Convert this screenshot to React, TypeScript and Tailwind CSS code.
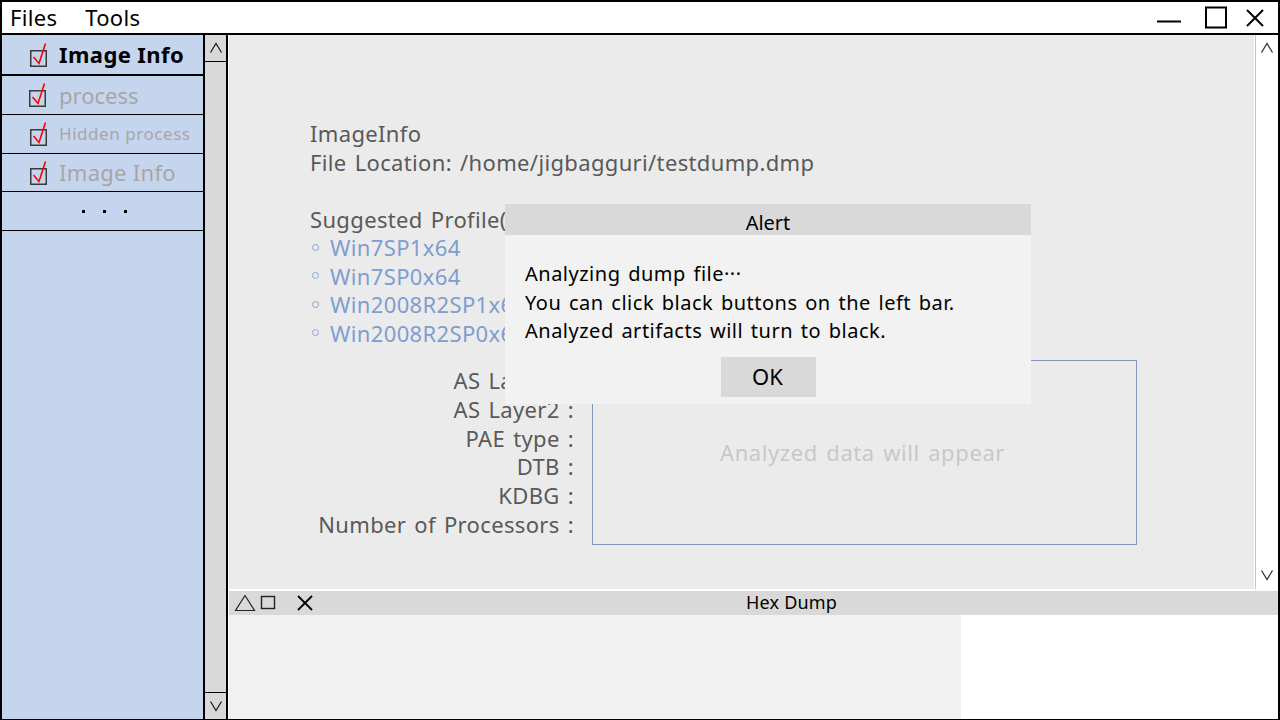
import React from "react";

function Check() {
  return (
    <svg width="20" height="26" viewBox="0 0 20 26" className="shrink-0">
      <rect x="1.75" y="8.75" width="15.5" height="15.5" fill="none" stroke="#3a3a3a" strokeWidth="1.5" />
      <polyline points="4.5,15 10,21.5 16.5,1.5" fill="none" stroke="#ff0000" strokeWidth="1.6" strokeLinejoin="miter" />
    </svg>
  );
}

function Chevron({ up, color = "#222" }: { up?: boolean; color?: string }) {
  return (
    <svg width="14" height="12" viewBox="0 0 14 12">
      {up ? (
        <polyline points="1.5,10.5 7,1.5 12.5,10.5" fill="none" stroke={color} strokeWidth="1.3" />
      ) : (
        <polyline points="1.5,1.5 7,10.5 12.5,1.5" fill="none" stroke={color} strokeWidth="1.3" />
      )}
    </svg>
  );
}

const profiles = ["Win7SP1x64", "Win7SP0x64", "Win2008R2SP1x64", "Win2008R2SP0x64"];
const labels = ["AS Layer1 :", "AS Layer2 :", "PAE type :", "DTB :", "KDBG :", "Number of Processors :"];

export default function App() {
  return (
    <div className="relative w-[1280px] h-[720px] overflow-hidden border-t-2 border-l-2 border-r-2 border-b border-black bg-white flex flex-col font-['Noto_Sans','Noto_Sans_CJK_KR',sans-serif]">
      {/* Menu bar */}
      <div className="h-[33px] shrink-0 border-b-2 border-black flex items-center text-[22px] text-black tracking-[0.3px]">
        <span className="ml-[8px]">Files</span>
        <span className="ml-[28px]">Tools</span>
        <div className="ml-auto flex items-center">
          <svg width="26" height="26" viewBox="0 0 26 26" className="mr-[22px]">
            <line x1="1" y1="16.5" x2="25" y2="16.5" stroke="#000" strokeWidth="2" />
          </svg>
          <svg width="24" height="24" viewBox="0 0 24 24" className="mr-[16px]">
            <rect x="2" y="1.5" width="20" height="20" fill="none" stroke="#000" strokeWidth="2" />
          </svg>
          <svg width="22" height="22" viewBox="0 0 22 22" className="mr-[12px]">
            <line x1="3" y1="3" x2="19" y2="19" stroke="#000" strokeWidth="2" />
            <line x1="19" y1="3" x2="3" y2="19" stroke="#000" strokeWidth="2" />
          </svg>
        </div>
      </div>

      {/* Body */}
      <div className="flex-1 flex min-h-0">
        {/* Sidebar */}
        <div className="w-[203px] shrink-0 bg-[#c6d5ee] border-r-2 border-black flex flex-col">
          <div className="h-[41px] border-b-2 border-black flex items-center pl-[27px]">
            <Check />
            <span className="ml-[10px] text-[22px] font-bold text-black tracking-[0.4px]">Image Info</span>
          </div>
          <div className="h-[39px] border-b border-black flex items-center pl-[26px]">
            <Check />
            <span className="ml-[11px] text-[22px] text-[#a6a6a6]">process</span>
          </div>
          <div className="h-[39px] border-b border-black flex items-center pl-[27px]">
            <Check />
            <span className="ml-[10px] text-[17px] text-[#a6a6a6] tracking-[0.55px]">Hidden process</span>
          </div>
          <div className="h-[38px] border-b border-black flex items-center pl-[27px]">
            <Check />
            <span className="ml-[10px] text-[22px] text-[#a6a6a6] tracking-[0.3px]">Image Info</span>
          </div>
          <div className="h-[39px] border-b border-black flex items-center justify-center gap-[18px] pl-[4px]">
            <span className="w-[3px] h-[3px] bg-black" />
            <span className="w-[3px] h-[3px] bg-black" />
            <span className="w-[3px] h-[3px] bg-black" />
          </div>
        </div>

        {/* Left scrollbar */}
        <div className="w-[23px] shrink-0 bg-[#d9d9d9] border-r-2 border-black flex flex-col">
          <div className="h-[27px] border-b border-black flex items-center justify-center">
            <Chevron up />
          </div>
          <div className="flex-1" />
          <div className="h-[27px] border-t border-black flex items-center justify-center">
            <Chevron />
          </div>
        </div>

        {/* Main column */}
        <div className="flex-1 flex flex-col min-w-0 border-l border-white">
          <div className="h-[556px] shrink-0 flex bg-white pb-[2px]">
            <div className="flex-1 bg-[#ebebeb] pl-[81px] pt-[84px] text-[22px] text-[#595959] leading-[28.5px] tracking-[0.35px] [word-spacing:2px]">
              <div>ImageInfo</div>
              <div>File Location: /home/jigbagguri/testdump.dmp</div>
              <div className="h-[28.5px]" />
              <div>Suggested Profile(s)</div>
              {profiles.map((p) => (
                <div key={p} className="flex items-center text-[#7f9dd0]">
                  <span className="w-[7px] h-[7px] rounded-full border border-[#8fa3c8] ml-[2px] mr-[11px]" />
                  {p}
                </div>
              ))}
              <div className="flex items-start mt-[13px]">
                <div className="w-[264px] text-right mt-[6px] leading-[28.8px]">
                  {labels.map((l) => (
                    <div key={l}>{l}</div>
                  ))}
                </div>
                <div className="ml-[18px] w-[545px] h-[185px] border border-[#8497bd] flex items-center justify-center pr-[4px] text-[#c8c8c8] tracking-[0.6px] [word-spacing:2px]">
                  Analyzed data will appear
                </div>
              </div>
            </div>
            <div className="w-[23px] shrink-0 bg-white ml-[1px] border-l border-[#c4c4c4] flex flex-col items-center justify-between pt-[7px] pb-[8px] pr-[1px]">
              <Chevron up color="#333" />
              <Chevron color="#333" />
            </div>
          </div>

          {/* Hex dump header */}
          <div className="h-[24px] shrink-0 bg-[#d9d9d9] flex items-center relative">
            <svg width="22" height="18" viewBox="0 0 22 18" className="ml-[5px]">
              <polygon points="11,1.5 20.5,16.5 1.5,16.5" fill="none" stroke="#222" strokeWidth="1.2" />
            </svg>
            <svg width="16" height="16" viewBox="0 0 16 16" className="ml-[4px]">
              <rect x="1.5" y="1.5" width="13" height="12" fill="none" stroke="#222" strokeWidth="1.4" />
            </svg>
            <svg width="18" height="18" viewBox="0 0 18 18" className="ml-[20px]">
              <line x1="2" y1="2" x2="16" y2="16" stroke="#000" strokeWidth="1.8" />
              <line x1="16" y1="2" x2="2" y2="16" stroke="#000" strokeWidth="1.8" />
            </svg>
            <span className="absolute left-[517px] top-[1px] text-[18px] text-black leading-[20px] tracking-[0.2px]">Hex Dump</span>
          </div>

          {/* Hex body */}
          <div className="flex-1 flex">
            <div className="w-[732px] bg-[#f2f2f2]" />
            <div className="flex-1 bg-white" />
          </div>
        </div>
      </div>

      {/* Alert dialog */}
      <div className="absolute left-[503px] top-[202px] w-[526px] h-[200px] bg-[#f2f2f2] flex flex-col">
        <div className="h-[31px] bg-[#d9d9d9] flex items-center justify-center pt-[7px] text-[20px] text-black">Alert</div>
        <div className="pl-[20px] pt-[25px] text-[20px] text-black leading-[28.5px] tracking-[0.5px] [word-spacing:2px]">
          <div>Analyzing dump file···</div>
          <div>You can click black buttons on the left bar.</div>
          <div>Analyzed artifacts will turn to black.</div>
        </div>
        <div className="flex justify-center mt-[11px]">
          <div className="w-[95px] h-[40px] bg-[#d9d9d9] flex items-center justify-center text-[22px] text-black pr-[1px]">OK</div>
        </div>
      </div>
    </div>
  );
}
